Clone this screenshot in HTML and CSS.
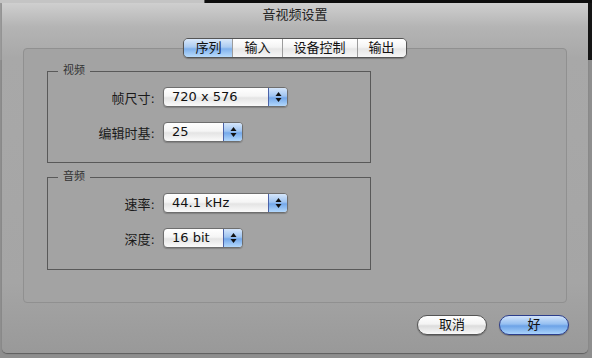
FILE: index.html
```html
<!DOCTYPE html>
<html lang="zh">
<head>
  <meta charset="UTF-8" />
  <title>音视频设置</title>
  <link rel="stylesheet" href="styles.css">
</head>
<body>
  <!-- Sheet dialog -->
  <div class="dialog">
    <div class="title">音视频设置</div>

    <div class="sheet">
      <div class="tabs">
        <span class="tab active">序列</span>
        <span class="tab">输入</span>
        <span class="tab">设备控制</span>
        <span class="tab">输出</span>
      </div>

      <div class="panel">
        <fieldset class="group video">
          <legend>视频</legend>
          <div class="rows">
            <label>帧尺寸:</label>
            <div class="popup wide">
              <span class="value">720 x 576</span>
              <span class="stepper"><svg width="7" height="12" viewBox="0 0 7 12"><path d="M3.5 1 L6.5 5 L0.5 5 Z M3.5 11 L6.5 7 L0.5 7 Z" fill="#111"/></svg></span>
            </div>
            <label>编辑时基:</label>
            <div class="popup narrow">
              <span class="value">25</span>
              <span class="stepper"><svg width="7" height="12" viewBox="0 0 7 12"><path d="M3.5 1 L6.5 5 L0.5 5 Z M3.5 11 L6.5 7 L0.5 7 Z" fill="#111"/></svg></span>
            </div>
          </div>
        </fieldset>

        <fieldset class="group audio">
          <legend>音频</legend>
          <div class="rows">
            <label>速率:</label>
            <div class="popup wide">
              <span class="value">44.1 kHz</span>
              <span class="stepper"><svg width="7" height="12" viewBox="0 0 7 12"><path d="M3.5 1 L6.5 5 L0.5 5 Z M3.5 11 L6.5 7 L0.5 7 Z" fill="#111"/></svg></span>
            </div>
            <label>深度:</label>
            <div class="popup narrow">
              <span class="value">16 bit</span>
              <span class="stepper"><svg width="7" height="12" viewBox="0 0 7 12"><path d="M3.5 1 L6.5 5 L0.5 5 Z M3.5 11 L6.5 7 L0.5 7 Z" fill="#111"/></svg></span>
            </div>
          </div>
        </fieldset>
      </div>
    </div>

    <div class="actions">
      <button class="btn">取消</button>
      <button class="btn default">好</button>
    </div>
  </div>
</body>
</html>
```

FILE: styles.css
```css
/* Basic reset */
* {
  box-sizing: border-box;
}
body {
  margin: 0;
  width: 592px;
  height: 358px;
  overflow: hidden;
  font-family: "DejaVu Sans", "Noto Sans CJK SC", sans-serif;
  color: #111;
  background:
    linear-gradient(to right, #c4c4c4 0 204px, #5a5a5a 204px 205px, #0e0e0e 205px) top / 100% 3px no-repeat,
    linear-gradient(to right, #9a9a9a 0 588px, #151515 588px) top / 100% 60px no-repeat,
    #8e8e8e;
}
.dialog {
  margin: 3px 0 0 2px;
  width: 586px;
  height: 350px;
  border-radius: 0 0 5px 5px;
  background: linear-gradient(#cfcfcf, #b4b4b4 24px, #a8a8a8 55px, #a5a5a5 280px, #999 350px);
  box-shadow: 0 1px 1px rgba(0,0,0,0.35);
  display: flex;
  flex-direction: column;
}
.title {
  height: 24px;
  line-height: 24px;
  text-align: center;
  font-size: 13px;
  color: #222;
}
/* Tabbed area */
.sheet {
  margin: 11px 21px 0;
}
.tabs {
  display: flex;
  width: fit-content;
  height: 20px;
  margin: 0 auto;
  position: relative;
  z-index: 1;
  border: 1px solid #555;
  border-radius: 5px;
  overflow: hidden;
  box-shadow: 0 1px 1px rgba(0,0,0,0.25);
}
.tab {
  padding: 0 11px;
  font-size: 13px;
  line-height: 18px;
  background: linear-gradient(#fff, #f4f4f4 45%, #e6e6e6 55%, #f6f6f6);
  border-left: 1px solid #9c9c9c;
}
.tab:first-child {
  border-left: none;
}
.tab.active {
  background: linear-gradient(#dbe9fa, #abcbf1 45%, #80b1ec 55%, #b9dcfc);
}
.panel {
  margin-top: -10px;
  height: 255px;
  padding: 15px 0 0 23px;
  border: 1px solid #909090;
  border-radius: 4px;
  background: #a3a3a3;
}
/* Group boxes */
.group {
  margin: 0;
  padding: 9px 0 0;
  width: 324px;
  min-inline-size: 0;
  border: 1px solid #595959;
}
.group.video {
  height: 99px;
}
.group.audio {
  margin-top: 7px;
  height: 100px;
}
.group legend {
  margin-left: 10px;
  padding: 0 5px;
  font-size: 11px;
  font-weight: normal;
  line-height: 14px;
  color: #333;
}
.rows {
  display: grid;
  grid-template-columns: 107px auto;
  column-gap: 8px;
  row-gap: 15px;
  align-items: center;
  justify-items: start;
}
.rows label {
  justify-self: end;
  font-size: 13px;
  color: #1a1a1a;
}
/* Popup menus */
.popup {
  display: flex;
  height: 20px;
  border: 1px solid #6e6e6e;
  border-radius: 4px;
  overflow: hidden;
  background: linear-gradient(#fff, #f5f5f5 45%, #e4e4e4 55%, #fafafa);
  box-shadow: 0 1px 1px rgba(0,0,0,0.2);
}
.popup.wide {
  width: 125px;
}
.popup.narrow {
  width: 80px;
}
.value {
  flex: 1;
  padding-left: 8px;
  font-size: 13px;
  line-height: 18px;
}
.stepper {
  width: 19px;
  display: flex;
  align-items: center;
  justify-content: center;
  border-left: 1px solid #4b62a8;
  background: linear-gradient(#d5e6fb, #9fc4f1 45%, #74a8ea 55%, #b3d8fc);
}
/* Dialog buttons */
.actions {
  display: flex;
  justify-content: flex-end;
  gap: 12px;
  margin-top: 12px;
  padding-right: 19px;
}
.btn {
  width: 70px;
  height: 20px;
  padding: 0;
  border: 1px solid #555;
  border-radius: 10px;
  font-family: inherit;
  font-size: 13px;
  line-height: 18px;
  color: #111;
  background: linear-gradient(#fff, #f3f3f3 45%, #dcdcdc 55%, #f8f8f8);
  box-shadow: 0 1px 1px rgba(0,0,0,0.3);
}
.btn.default {
  border-color: #2c3e8c;
  background: linear-gradient(#d2e4fb, #95bff1 45%, #6da3e7 55%, #aad3fc);
}
```
